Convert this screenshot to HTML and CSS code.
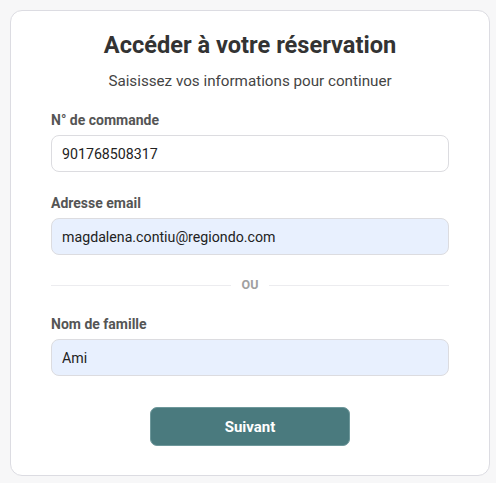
FILE: index.html
```html
<!DOCTYPE html>
<html lang="fr">
<head>
    <meta charset="UTF-8">
    <meta name="viewport" content="width=device-width, initial-scale=1.0">
    <title>Accéder à votre réservation</title>
    <link rel="stylesheet" href="styles.css">
</head>
<body>
    <div class="card">
        <h1>Accéder à votre réservation</h1>
        <p class="subtitle">Saisissez vos informations pour continuer</p>

        <form class="lookup-form">
            <div class="field">
                <label for="order">N° de commande</label>
                <input id="order" type="text" value="901768508317">
            </div>

            <div class="field">
                <label for="email">Adresse email</label>
                <input id="email" class="filled" type="text" value="magdalena.contiu@regiondo.com">
            </div>

            <div class="separator"><span>OU</span></div>

            <div class="field">
                <label for="lastname">Nom de famille</label>
                <input id="lastname" class="filled" type="text" value="Ami">
            </div>

            <div class="actions">
                <button type="button" class="btn-next">Suivant</button>
            </div>
        </form>
    </div>
</body>
</html>
```

FILE: styles.css
```css
* {
    margin: 0;
    padding: 0;
    box-sizing: border-box;
}

body {
    font-family: Roboto, 'Liberation Sans', Arial, sans-serif;
    background-color: #f7f7f8;
    color: #333;
    padding: 10px;
}

.card {
    width: 480px;
    height: 466px;
    background-color: #fff;
    border: 1px solid #dcdce2;
    border-radius: 12px;
    padding: 20px 40px 0;
}

h1 {
    font-size: 23.6px;
    line-height: 28px;
    font-weight: 700;
    text-align: center;
    color: #333;
}

.subtitle {
    margin-top: 12px;
    font-size: 15.2px;
    line-height: 20px;
    text-align: center;
    color: #444;
}

.lookup-form {
    margin-top: 20px;
}

.field label {
    display: block;
    font-size: 14px;
    line-height: 18px;
    font-weight: 700;
    color: #555;
    margin-bottom: 6px;
}

.field + .field {
    margin-top: 22px;
}

.field input {
    display: block;
    width: 100%;
    height: 37px;
    padding: 0 10px;
    font-family: Roboto, 'Liberation Sans', Arial, sans-serif;
    font-size: 14.2px;
    color: #222;
    background-color: #fff;
    border: 1px solid #dcdce0;
    border-radius: 8px;
    outline: none;
}

/* champs pré-remplis par le navigateur */
.field input.filled {
    background-color: #e8f0fe;
}

/* séparateur "OU" */
.separator {
    display: flex;
    align-items: center;
    gap: 11px;
    margin: 22px 0 22px;
    font-size: 12.5px;
    line-height: 16px;
    font-weight: 700;
    color: #a0a0a0;
}

.separator::before,
.separator::after {
    content: "";
    flex: 1;
    height: 1px;
    background-color: #ececef;
}

.actions {
    display: flex;
    justify-content: center;
    margin-top: 31px;
}

.btn-next {
    width: 200px;
    height: 39px;
    background-color: #4a7a7e;
    border: 1px solid #6e989b;
    border-radius: 7px;
    color: #fff;
    font-family: Roboto, 'Liberation Sans', Arial, sans-serif;
    font-size: 15px;
    font-weight: 700;
    cursor: pointer;
}
```
